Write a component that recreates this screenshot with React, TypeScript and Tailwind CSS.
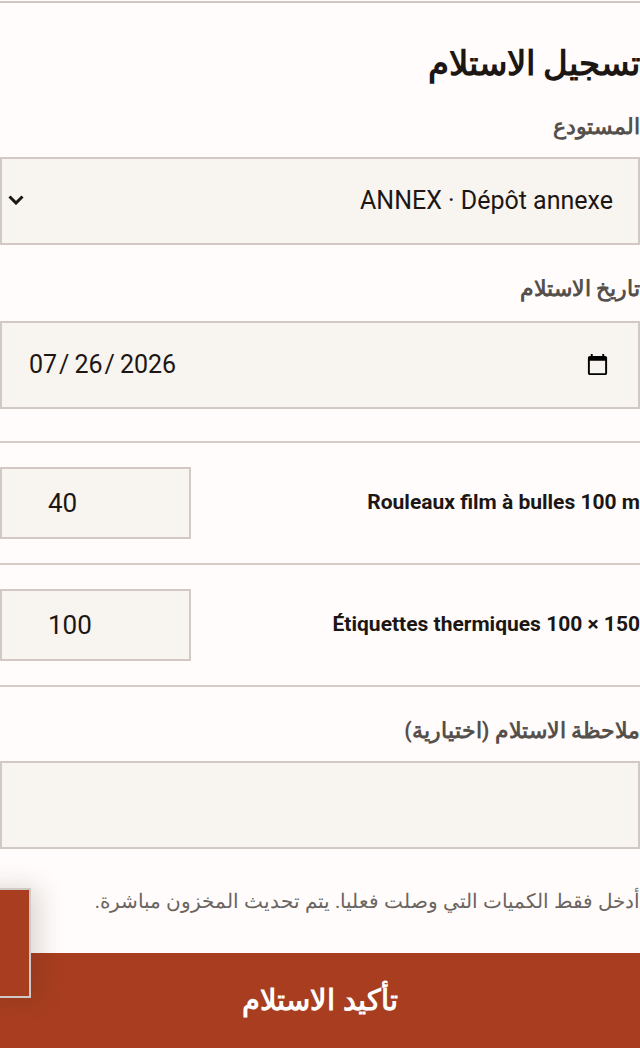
import { useState } from "react";

type Line = {
  id: string;
  name: string;
  qty: number;
};

const LINES: Line[] = [
  { id: "bubble", name: "Rouleaux film à bulles 100 m", qty: 40 },
  { id: "labels", name: "Étiquettes thermiques 100 × 150", qty: 100 },
];

const fieldClass =
  "block w-full h-[88px] border-2 border-[#d3c9c4] bg-[#f8f4ef] text-[25px] text-[#1c1714] outline-none";

const labelClass = "block text-[21.5px] font-bold leading-5 text-[#55504c]";

export default function App() {
  const [warehouse, setWarehouse] = useState("ANNEX");
  const [date, setDate] = useState("2026-07-26");
  const [qty, setQty] = useState<Record<string, string>>(
    Object.fromEntries(LINES.map((line) => [line.id, String(line.qty)]))
  );
  const [note, setNote] = useState("");

  return (
    <div
      dir="rtl"
      className="relative min-h-[1048px] overflow-hidden bg-[#fffcfb] pt-px font-['Roboto','Noto_Sans',sans-serif] text-[#1c1714]"
    >
      <div className="border-t-2 border-[#d0c6c1]" />

      <h1 className="mt-10 text-[34px] font-bold leading-[40px]">تسجيل الاستلام</h1>

      <label className={`${labelClass} mt-[34px] mb-5`}>المستودع</label>
      <div className="relative">
        <select
          value={warehouse}
          onChange={(e) => setWarehouse(e.target.value)}
          className={`${fieldClass} appearance-none px-[25px]`}
        >
          <option value="MAIN">MAIN · Dépôt principal</option>
          <option value="ANNEX">ANNEX · Dépôt annexe</option>
        </select>
        <svg
          viewBox="0 0 16 10"
          className="pointer-events-none absolute left-2 top-[38px] h-[10px] w-4"
          fill="none"
          stroke="#1c1714"
          strokeWidth="3"
        >
          <polyline points="1.5,1.5 8,8 14.5,1.5" />
        </svg>
      </div>

      <label className={`${labelClass} mt-[34px] mb-[22px]`}>تاريخ الاستلام</label>
      <input
        type="date"
        dir="ltr"
        value={date}
        onChange={(e) => setDate(e.target.value)}
        className={`${fieldClass} px-[26px] [&::-webkit-datetime-edit-text]:pl-[1px] [&::-webkit-datetime-edit-text]:pr-[4px]`}
      />

      <div className="mt-8">
        {LINES.map((line) => (
          <div key={line.id} className="flex items-center justify-between border-t-2 border-[#d6ccc7] py-6">
            <span className="whitespace-nowrap text-[21px] font-bold">{line.name}</span>
            <input
              type="number"
              dir="ltr"
              value={qty[line.id]}
              onChange={(e) => setQty((items) => ({ ...items, [line.id]: e.target.value }))}
              className="h-[72px] w-[191px] shrink-0 border-2 border-[#d3c9c4] bg-[#f8f4ef] pl-[46px] text-[26px] outline-none"
            />
          </div>
        ))}
        <div className="border-t-2 border-[#d6ccc7]" />
      </div>

      <label className={`${labelClass} mt-[34px] mb-5`}>ملاحظة الاستلام (اختيارية)</label>
      <textarea
        value={note}
        onChange={(e) => setNote(e.target.value)}
        className={`${fieldClass} resize-none px-6 py-4`}
      />

      <p className="mt-10 text-[20px] leading-6 text-[#6b6561]">
        أدخل فقط الكميات التي وصلت فعليا. يتم تحديث المخزون مباشرة.
      </p>

      <button
        type="button"
        className="mt-[40px] block h-[95px] w-full bg-[#a83e1f] text-[29px] font-bold text-white"
      >
        تأكيد الاستلام
      </button>

      <div className="absolute left-[-100px] top-[888px] h-[110px] w-[131px] border-2 border-[#cfc9c5] bg-[#a83e1f] shadow-[8px_0_24px_rgba(60,40,30,0.18)]" />
    </div>
  );
}
